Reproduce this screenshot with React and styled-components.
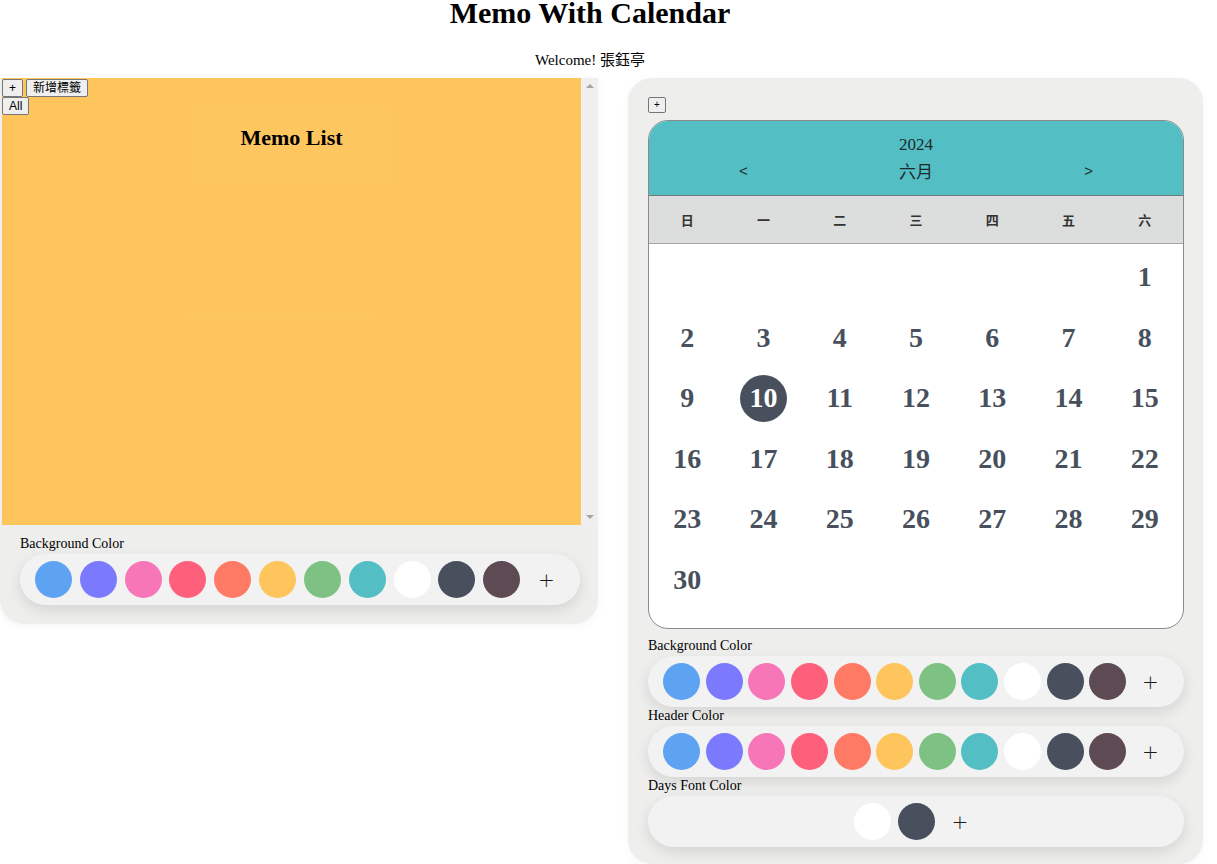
import React from 'react';
import styled, { createGlobalStyle } from 'styled-components';

const GlobalStyle = createGlobalStyle`
  body {
    margin: 0;
    background: #ffffff;
    font-family: "Liberation Serif", "Noto Sans CJK TC", serif;
    color: #000;
  }
`;

const COLORS = [
  '#5ea3f2', '#7b7afe', '#f776b7', '#fe5f7b', '#ff7a65', '#fec55c',
  '#7dc282', '#53bec4', '#ffffff', '#47505c', '#5e4a53',
];
const FONT_COLORS = ['#ffffff', '#47505c'];
const WEEKDAYS = ['日', '一', '二', '三', '四', '五', '六'];

const Page = styled.div`
  width: 1203px;
`;

const Title = styled.h1`
  width: 1180px;
  margin: 0;
  font-size: 30px;
  line-height: 25px;
  font-weight: 700;
  text-align: center;
`;

const Welcome = styled.p`
  width: 1180px;
  margin: 27px 0 10px;
  font-size: 15px;
  line-height: 16px;
  text-align: center;
`;

const Columns = styled.div`
  display: flex;
  align-items: flex-start;
  gap: 30px;
`;

const MemoPanel = styled.section`
  width: 598px;
  box-sizing: border-box;
  padding: 0 0 19px 2px;
  background: #eeeeed;
  border-radius: 0 0 24px 24px;
  box-shadow: 0 2px 8px rgba(0, 0, 0, 0.04);
`;

const MemoFrame = styled.div`
  display: flex;
  height: 447px;
`;

const MemoScroll = styled.div`
  flex: 1;
  overflow: hidden;
  background: #fec55c;
`;

const ScrollTrack = styled.div`
  width: 17px;
  display: flex;
  flex-direction: column;
  justify-content: space-between;
  align-items: center;
  padding: 6px 0;
  box-sizing: border-box;
  background: #efefef;
`;

const Arrow = styled.span`
  width: 0;
  height: 0;
  border-left: 4px solid transparent;
  border-right: 4px solid transparent;
  ${p => (p.$down ? 'border-top: 4px solid #a3a3a3;' : 'border-bottom: 4px solid #a3a3a3;')}
`;

const ToolRow = styled.div`
  display: flex;
  gap: 3px;
  padding-top: 1px;
`;

const SmallButton = styled.button`
  display: block;
  font-family: "Liberation Sans", "Noto Sans CJK TC", sans-serif;
  font-size: ${p => (p.$tiny ? '10px' : '12px')};
  line-height: ${p => (p.$tiny ? '12px' : '14px')};
  padding: ${p => (p.$tiny ? '1px 5px' : '1px 6px')};
  background: #efefef;
  border: 1px solid #767676;
  border-radius: 2px;
  color: #000;
  cursor: pointer;
`;

const MemoHeader = styled.div`
  width: 200px;
  margin: -6px auto 0;
  padding: 16px 0 30px;
  text-align: center;
  background: rgba(255, 255, 255, 0.025);
`;

const MemoTitle = styled.h2`
  margin: 0;
  font-size: 22px;
  line-height: 26px;
  font-weight: 700;
`;

const FaintLine = styled.div`
  width: 195px;
  height: 1px;
  margin: 138px 0 0 181px;
  background: rgba(255, 255, 255, 0.06);
`;

const PaletteArea = styled.div`
  padding: ${p => p.$pad || '0'};
`;

const SectionLabel = styled.div`
  font-size: 14px;
  line-height: 16px;
  margin-top: ${p => p.$top || '1px'};
  margin-bottom: 2px;
`;

const PaletteBar = styled.div`
  height: 51px;
  box-sizing: border-box;
  padding: 0 15px;
  display: flex;
  align-items: center;
  justify-content: ${p => (p.$center ? 'center' : 'space-between')};
  gap: ${p => (p.$center ? '7px' : '0')};
  background: #f3f2f2;
  border-radius: 26px;
  box-shadow: 0 5px 14px rgba(0, 0, 0, 0.11);
`;

const Swatch = styled.button`
  width: 37px;
  height: 37px;
  flex: 0 1 37px;
  min-width: 0;
  padding: 0;
  border: none;
  border-radius: 50%;
  background: ${p => p.$color};
  cursor: pointer;
`;

const AddSwatch = styled.button`
  width: 37px;
  height: 37px;
  flex: 0 0 37px;
  padding: 0;
  border: none;
  background: transparent;
  font-family: "DejaVu Sans", sans-serif;
  font-size: 20px;
  font-weight: 300;
  color: #1a1a1a;
  cursor: pointer;
`;

const CalendarPanel = styled.section`
  width: 575px;
  box-sizing: border-box;
  padding: 19px 19px 17px 20px;
  background: #eeeeed;
  border-radius: 24px;
  box-shadow: 0 2px 8px rgba(0, 0, 0, 0.04);
`;

const Calendar = styled.div`
  margin-top: 7px;
  border: 1px solid #8a8a8a;
  border-radius: 20px;
  overflow: hidden;
  background: #ffffff;
`;

const CalHeader = styled.div`
  height: 75px;
  box-sizing: border-box;
  padding-top: 13px;
  background: #53bec4;
  border-bottom: 1px solid #6f7b7c;
  text-align: center;
  color: #1d2a2b;
`;

const Year = styled.div`
  font-size: 17px;
  line-height: 22px;
`;

const MonthRow = styled.div`
  display: flex;
  align-items: center;
  justify-content: space-between;
  padding: 0 90px;
  height: 28px;
`;

const NavButton = styled.button`
  border: none;
  background: none;
  padding: 0;
  font-family: "Liberation Sans", sans-serif;
  font-size: 15px;
  color: #1d2a2b;
  cursor: pointer;
`;

const MonthName = styled.span`
  font-family: "Noto Sans CJK TC", sans-serif;
  font-size: 17px;
`;

const WeekRow = styled.div`
  display: grid;
  grid-template-columns: repeat(7, 1fr);
  height: 47px;
  align-items: center;
  background: #dcdddd;
  border-bottom: 1px solid #a5a7a7;
  font-family: "Noto Sans CJK TC", sans-serif;
  font-size: 13px;
  font-weight: 700;
  color: #333;
  text-align: center;
`;

const DayGrid = styled.div`
  display: grid;
  grid-template-columns: repeat(7, 1fr);
  grid-auto-rows: 60.5px;
  padding: 3px 0 18px;
`;

const DayCell = styled.div`
  display: flex;
  align-items: center;
  justify-content: center;
`;

const DayNum = styled.span`
  width: 47px;
  height: 47px;
  display: flex;
  align-items: center;
  justify-content: center;
  border-radius: 50%;
  font-size: 28px;
  font-weight: 700;
  color: ${p => (p.$active ? '#ffffff' : '#47505c')};
  background: ${p => (p.$active ? '#47505c' : 'transparent')};
`;

const Palette = ({ label, colors, center, top }) => (
  <>
    <SectionLabel $top={top}>{label}</SectionLabel>
    <PaletteBar $center={center}>
      {colors.map(c => (
        <Swatch key={c} $color={c} />
      ))}
      <AddSwatch>+</AddSwatch>
    </PaletteBar>
  </>
);

const App = () => {
  const days = [];
  for (let i = 0; i < 6; i++) days.push(null);
  for (let d = 1; d <= 30; d++) days.push(d);

  return (
    <Page>
      <GlobalStyle />
      <Title>Memo With Calendar</Title>
      <Welcome>Welcome! 張鈺亭</Welcome>
      <Columns>
        <MemoPanel>
          <MemoFrame>
            <MemoScroll>
              <ToolRow>
                <SmallButton>+</SmallButton>
                <SmallButton>新增標籤</SmallButton>
              </ToolRow>
              <div>
                <SmallButton>All</SmallButton>
              </div>
              <MemoHeader>
                <MemoTitle>Memo List</MemoTitle>
              </MemoHeader>
              <FaintLine />
            </MemoScroll>
            <ScrollTrack>
              <Arrow />
              <Arrow $down />
            </ScrollTrack>
          </MemoFrame>
          <PaletteArea $pad="0 18px">
            <Palette label="Background Color" colors={COLORS} top="11px" />
          </PaletteArea>
        </MemoPanel>

        <CalendarPanel>
          <SmallButton $tiny>+</SmallButton>
          <Calendar>
            <CalHeader>
              <Year>2024</Year>
              <MonthRow>
                <NavButton>&lt;</NavButton>
                <MonthName>六月</MonthName>
                <NavButton>&gt;</NavButton>
              </MonthRow>
            </CalHeader>
            <WeekRow>
              {WEEKDAYS.map(w => (
                <span key={w}>{w}</span>
              ))}
            </WeekRow>
            <DayGrid>
              {days.map((d, i) => (
                <DayCell key={i}>
                  {d && <DayNum $active={d === 10}>{d}</DayNum>}
                </DayCell>
              ))}
            </DayGrid>
          </Calendar>
          <Palette label="Background Color" colors={COLORS} top="9px" />
          <Palette label="Header Color" colors={COLORS} />
          <Palette label="Days Font Color" colors={FONT_COLORS} center />
        </CalendarPanel>
      </Columns>
    </Page>
  );
};

export default App;
